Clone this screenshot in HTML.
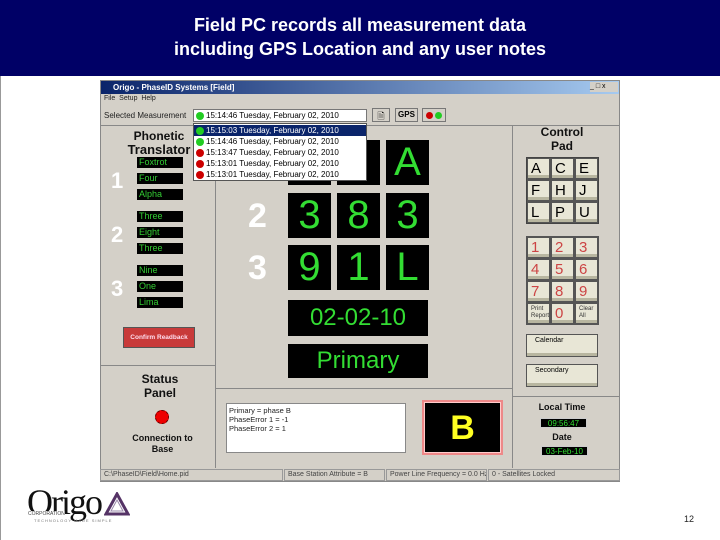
<!DOCTYPE html>
<html><head><meta charset="utf-8"><style>
*{margin:0;padding:0;box-sizing:border-box}
body{width:720px;height:540px;background:#fff;position:relative;overflow:hidden;font-family:"Liberation Sans",sans-serif}
.a{position:absolute}
.hdr{left:0;top:0;width:720px;height:76px;background:#000066;color:#fff;text-align:center;font-size:18px;font-weight:bold;line-height:24px;padding-top:13px}
.win{left:100px;top:80px;width:520px;height:402px;background:#d4d0c8;border:1px solid #888}
.blk{background:#000;color:#33dd33;text-align:center}
.g{background:#000;color:#33cc33;font-size:9px;line-height:11px;padding-left:2px;width:46px;height:11px;left:137px}
.cell{width:43px;height:45px;font-size:40px;line-height:45px}
.wn{color:#fff;font-weight:bold;font-size:34px}
.pk{background:#e8e6d6;border:1px solid #555;box-shadow:inset 0 -3px 0 #b8b6a0;font-size:15px;line-height:20px;padding-left:3px;width:23px;height:21px}
.h{font-weight:bold;font-size:12px;text-align:center;color:#111}
.sb{top:469px;height:12px;border:1px solid #999;font-size:7px;line-height:10px;color:#444;padding-left:3px;background:#d4d0c8;white-space:nowrap;overflow:hidden}
.dd{font-size:8px;line-height:11px;height:11px;padding-left:12px;position:relative;white-space:nowrap}
.dd i{position:absolute;left:2px;top:2px;width:8px;height:8px;border-radius:50%}
</style></head><body>
<div class="a hdr">Field PC records all measurement data<br>including GPS Location and any user notes</div>
<div class="a" style="left:0;top:76px;width:1px;height:464px;background:#999"></div>
<div class="a win"></div>
<div class="a" style="left:101px;top:81px;width:518px;height:13px;background:linear-gradient(90deg,#0a246a,#a6caf0);color:#fff;font-size:8px;font-weight:bold;line-height:13px;padding-left:12px">Origo - PhaseID Systems [Field]</div>
<div class="a" style="left:590px;top:82px;width:28px;height:10px;background:#d4d0c8;font-size:7px;line-height:10px">_ □ x</div>
<div class="a" style="left:104px;top:95px;font-size:7px;color:#222">File &nbsp;Setup &nbsp;Help</div>
<div class="a" style="left:104px;top:111px;font-size:8px;color:#222">Selected Measurement</div>
<div class="a" style="left:193px;top:109px;width:174px;height:13px;background:#fff;border:1px solid #777"><div class="dd"><i style="background:#2c2"></i>15:14:46 Tuesday, February 02, 2010</div></div>
<div class="a" style="left:372px;top:108px;width:18px;height:14px;border:1px solid #777;font-size:9px;text-align:center">🗎</div>
<div class="a" style="left:395px;top:108px;width:23px;height:14px;border:1px solid #777;font-size:8px;font-weight:bold;text-align:center;line-height:12px">GPS</div>
<div class="a" style="left:422px;top:108px;width:24px;height:14px;border:1px solid #777"><span class="a" style="left:3px;top:3px;width:7px;height:7px;border-radius:50%;background:#c00"></span><span class="a" style="left:12px;top:3px;width:7px;height:7px;border-radius:50%;background:#2c2"></span></div>
<div class="a" style="left:101px;top:125px;width:518px;height:1px;background:#888"></div>
<div class="a" style="left:215px;top:126px;width:1px;height:342px;background:#888"></div>
<div class="a" style="left:512px;top:126px;width:1px;height:342px;background:#888"></div>
<div class="a" style="left:101px;top:365px;width:114px;height:1px;background:#888"></div>
<div class="a" style="left:215px;top:388px;width:297px;height:1px;background:#888"></div>
<div class="a" style="left:512px;top:396px;width:107px;height:1px;background:#888"></div>
<div class="a h" style="left:120px;top:129px;width:78px;font-size:12px;line-height:14px">Phonetic<br><span style="font-size:13px">Translator</span></div>
<div class="a g" style="top:157px">Foxtrot</div><div class="a g" style="top:173px">Four</div><div class="a g" style="top:189px">Alpha</div>
<div class="a g" style="top:211px">Three</div><div class="a g" style="top:227px">Eight</div><div class="a g" style="top:243px">Three</div>
<div class="a g" style="top:265px">Nine</div><div class="a g" style="top:281px">One</div><div class="a g" style="top:297px">Lima</div>
<div class="a wn" style="left:111px;top:168px;font-size:22px">1</div>
<div class="a wn" style="left:111px;top:222px;font-size:22px">2</div>
<div class="a wn" style="left:111px;top:276px;font-size:22px">3</div>
<div class="a" style="left:123px;top:327px;width:72px;height:21px;background:#c83a3a;border:1px solid #555;color:#fde;font-size:6.5px;font-weight:bold;text-align:center;line-height:19px">Confirm Readback</div>
<div class="a h" style="left:120px;top:372px;width:80px;line-height:14px">Status<br>Panel</div>
<div class="a" style="left:155px;top:410px;width:14px;height:14px;border-radius:50%;background:#e00;border:1px dashed #600"></div>
<div class="a h" style="left:115px;top:433px;width:95px;font-size:9px;line-height:11px">Connection to<br>Base</div>
<div class="a blk cell" style="left:288px;top:140px"></div>
<div class="a blk cell" style="left:337px;top:140px"></div>
<div class="a blk cell" style="left:386px;top:140px">A</div>
<div class="a blk cell" style="left:288px;top:193px">3</div>
<div class="a blk cell" style="left:337px;top:193px">8</div>
<div class="a blk cell" style="left:386px;top:193px">3</div>
<div class="a blk cell" style="left:288px;top:245px">9</div>
<div class="a blk cell" style="left:337px;top:245px">1</div>
<div class="a blk cell" style="left:386px;top:245px">L</div>
<div class="a wn" style="left:248px;top:197px">2</div>
<div class="a wn" style="left:248px;top:249px">3</div>
<div class="a blk" style="left:288px;top:300px;width:140px;height:36px;font-size:24px;line-height:36px">02-02-10</div>
<div class="a blk" style="left:288px;top:344px;width:140px;height:34px;font-size:24px;line-height:34px">Primary</div>
<div class="a" style="left:226px;top:403px;width:180px;height:50px;background:#fff;border:1px solid #888;font-size:7.5px;line-height:9px;padding:2px;color:#222">Primary = phase B<br>PhaseError 1 = -1<br>PhaseError 2 = 1</div>
<div class="a" style="left:422px;top:400px;width:81px;height:55px;background:#e88;padding:2px"><div style="background:#000;border:1px solid #fcc;height:51px;color:#ff2;font-size:34px;font-weight:bold;text-align:center;line-height:51px">B</div></div>
<div class="a" style="left:193px;top:123px;width:174px;height:58px;background:#fff;border:1px solid #555;padding-top:1px">
<div class="dd" style="background:#0a246a;color:#fff"><i style="background:#2c2"></i>15:15:03 Tuesday, February 02, 2010</div>
<div class="dd"><i style="background:#2c2"></i>15:14:46 Tuesday, February 02, 2010</div>
<div class="dd"><i style="background:#c00"></i>15:13:47 Tuesday, February 02, 2010</div>
<div class="dd"><i style="background:#c00"></i>15:13:01 Tuesday, February 02, 2010</div>
<div class="dd"><i style="background:#c00"></i>15:13:01 Tuesday, February 02, 2010</div>
</div>
<div class="a h" style="left:525px;top:125px;width:74px;line-height:14px">Control<br>Pad</div>
<div class="a" style="left:526px;top:157px;width:73px;height:67px;background:#555;border:1px solid #444"></div>
<div class="a pk" style="left:527px;top:158px">A</div><div class="a pk" style="left:551px;top:158px">C</div><div class="a pk" style="left:575px;top:158px">E</div>
<div class="a pk" style="left:527px;top:180px">F</div><div class="a pk" style="left:551px;top:180px">H</div><div class="a pk" style="left:575px;top:180px">J</div>
<div class="a pk" style="left:527px;top:202px">L</div><div class="a pk" style="left:551px;top:202px">P</div><div class="a pk" style="left:575px;top:202px">U</div>
<div class="a" style="left:526px;top:236px;width:73px;height:89px;background:#555"></div>
<div style="color:#c44">
<div class="a pk" style="left:527px;top:237px">1</div><div class="a pk" style="left:551px;top:237px">2</div><div class="a pk" style="left:575px;top:237px">3</div>
<div class="a pk" style="left:527px;top:259px">4</div><div class="a pk" style="left:551px;top:259px">5</div><div class="a pk" style="left:575px;top:259px">6</div>
<div class="a pk" style="left:527px;top:281px">7</div><div class="a pk" style="left:551px;top:281px">8</div><div class="a pk" style="left:575px;top:281px">9</div>
<div class="a pk" style="left:527px;top:303px;font-size:6px;line-height:7px;color:#333;padding-top:2px">Print Report</div><div class="a pk" style="left:551px;top:303px">0</div><div class="a pk" style="left:575px;top:303px;font-size:6px;line-height:7px;color:#333;padding-top:2px">Clear All</div>
</div>
<div class="a pk" style="left:526px;top:334px;width:72px;height:23px;font-size:7px;line-height:12px;padding-left:8px">Calendar</div>
<div class="a pk" style="left:526px;top:364px;width:72px;height:23px;font-size:7px;line-height:12px;padding-left:8px">Secondary</div>
<div class="a h" style="left:525px;top:402px;width:74px;font-size:9px">Local Time</div>
<div class="a blk" style="left:540px;top:418px;width:47px;height:10px;font-size:8px;line-height:10px;border:1px solid #ccc">09:56:47</div>
<div class="a h" style="left:525px;top:432px;width:74px;font-size:9px">Date</div>
<div class="a blk" style="left:541px;top:446px;width:47px;height:10px;font-size:8px;line-height:10px;border:1px solid #ccc">03-Feb-10</div>
<div class="a sb" style="left:100px;width:183px">C:\PhaseID\Field\Home.pid</div>
<div class="a sb" style="left:284px;width:101px">Base Station Attribute = B</div>
<div class="a sb" style="left:386px;width:101px">Power Line Frequency = 0.0 Hz</div>
<div class="a sb" style="left:488px;width:132px">0 - Satellites Locked</div>
<div class="a" style="left:27px;top:481px;font-family:'Liberation Serif',serif;font-size:36px;color:#111;letter-spacing:-2px">Origo</div>
<svg class="a" style="left:104px;top:492px" width="26" height="26" viewBox="0 0 26 26"><path d="M13 2 L24 22 L2 22 Z" fill="none" stroke="#553366" stroke-width="3"/><path d="M13 8 L19 19 L7 19 Z" fill="none" stroke="#9988aa" stroke-width="1"/></svg>
<div class="a" style="left:28px;top:511px;font-size:5px;color:#444;background:#fff">CORPORATION</div>
<div class="a" style="left:34px;top:518px;font-size:4px;color:#777;letter-spacing:1px">TECHNOLOGY MADE SIMPLE</div>
<div class="a" style="left:684px;top:514px;font-size:9px;color:#222">12</div>
</body></html>
